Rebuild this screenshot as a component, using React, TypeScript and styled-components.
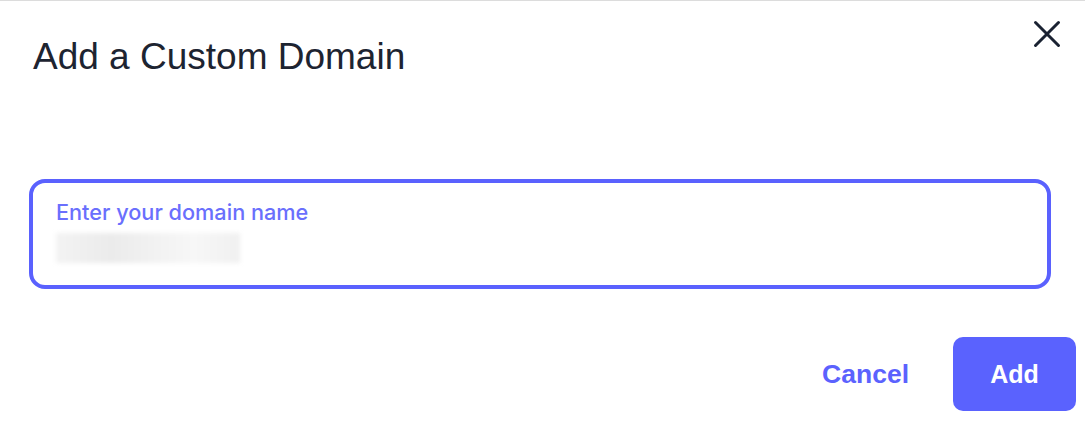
import React from "react";
import styled, { createGlobalStyle } from "styled-components";

const GlobalStyle = createGlobalStyle`
  html, body {
    margin: 0;
    padding: 0;
    background: #ffffff;
  }
  body {
    font-family: "Liberation Sans", Arial, sans-serif;
  }
`;

const Dialog = styled("div")`
  box-sizing: border-box;
  width: 1085px;
  height: 423px;
  border-top: 1px solid #dcdcdc;
  background: #ffffff;
  display: flex;
  flex-direction: column;
  padding: 19px 9px 0 29px;
`;

const Header = styled("div")`
  display: flex;
  justify-content: space-between;
  align-items: flex-start;
  padding-right: 15px;
`;

const Title = styled("h1")`
  margin: 16px 0 0 4px;
  font-family: "Liberation Sans", Arial, sans-serif;
  font-size: 37px;
  font-weight: 400;
  line-height: 42px;
  color: #1d2431;
`;

const CloseButton = styled("button")`
  border: none;
  background: none;
  padding: 0;
  width: 28px;
  height: 28px;
  cursor: pointer;
  display: flex;
  align-items: center;
  justify-content: center;
`;

const Field = styled("div")`
  box-sizing: border-box;
  margin-top: 101px;
  width: 1022px;
  height: 110px;
  border: 4px solid #5a61fe;
  border-radius: 16px;
  padding: 17px 23px 0;
  display: flex;
  flex-direction: column;
`;

const Label = styled("label")`
  font-family: Inter, "Noto Sans", sans-serif;
  font-size: 21.7px;
  font-weight: 500;
  line-height: 24px;
  color: #6a6ffd;
`;

const BlurredValue = styled("div")`
  margin-top: 9px;
  width: 184px;
  height: 30px;
  background: linear-gradient(
    90deg,
    #f3f3f3 0%,
    #ebebeb 30%,
    #f2f2f2 55%,
    #f7f7f7 75%,
    #f0f0f0 100%
  );
  filter: blur(2px);
`;

const Footer = styled("div")`
  display: flex;
  justify-content: flex-end;
  align-items: center;
  gap: 44px;
  margin-top: 48px;
`;

const TextButton = styled("button")`
  border: none;
  background: none;
  padding: 0;
  font-family: "Liberation Sans", Arial, sans-serif;
  font-size: 26.5px;
  font-weight: 700;
  color: #5b62fe;
  cursor: pointer;
`;

const PrimaryButton = styled("button")`
  border: none;
  width: 123px;
  height: 74px;
  border-radius: 10px;
  background: #5a62fe;
  color: #ffffff;
  font-family: "Liberation Sans", Arial, sans-serif;
  font-size: 25px;
  font-weight: 700;
  cursor: pointer;
`;

const CloseIcon = () => (
  <svg width="28" height="28" viewBox="0 0 28 28" fill="none">
    <path
      d="M2.5 2.5L25.5 25.5M25.5 2.5L2.5 25.5"
      stroke="#1a2232"
      strokeWidth="3"
      strokeLinecap="round"
    />
  </svg>
);

const App = () => {
  return (
    <>
      <GlobalStyle />
      <Dialog>
        <Header>
          <Title>Add a Custom Domain</Title>
          <CloseButton aria-label="Close">
            <CloseIcon />
          </CloseButton>
        </Header>
        <Field>
          <Label>Enter your domain name</Label>
          <BlurredValue />
        </Field>
        <Footer>
          <TextButton>Cancel</TextButton>
          <PrimaryButton>Add</PrimaryButton>
        </Footer>
      </Dialog>
    </>
  );
};

export default App;
